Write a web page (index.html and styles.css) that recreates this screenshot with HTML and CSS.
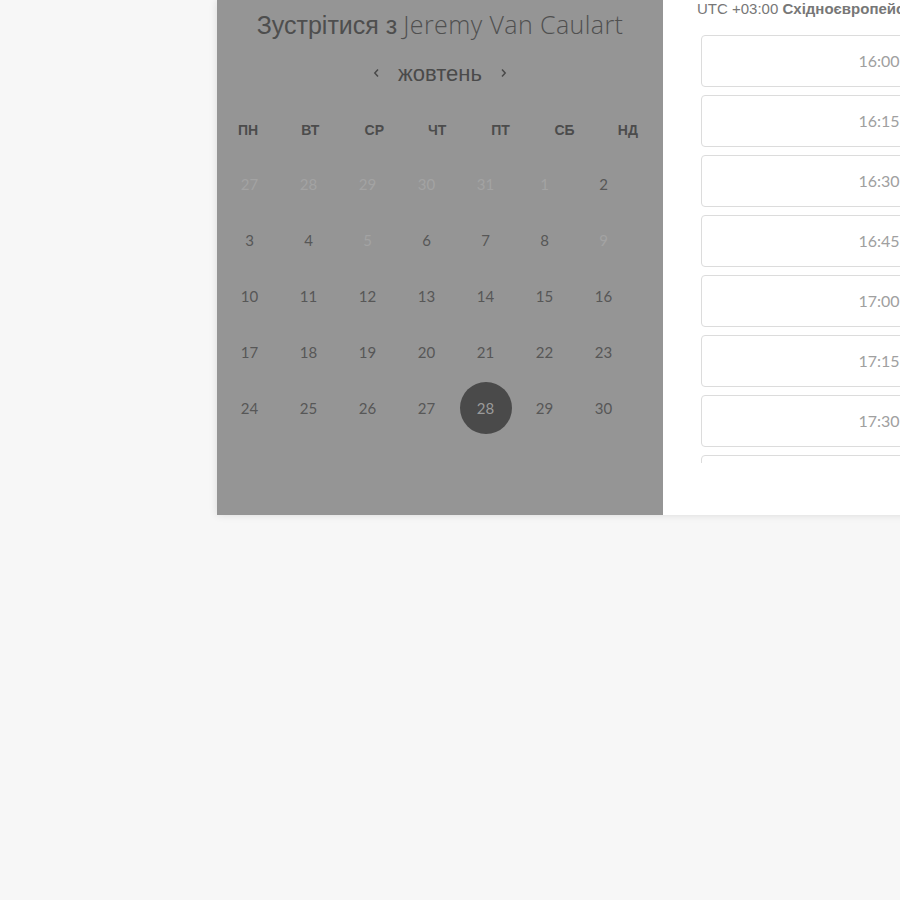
FILE: index.html
```html
<!DOCTYPE html>
<html lang="uk">
<head>
<meta charset="utf-8">
<title>Зустрітися з Jeremy Van Caulart</title>
<link rel="stylesheet" href="styles.css">
</head>
<body>
<div class="card">
  <section class="left">
    <h1 class="title"><span class="title-cyr">Зустрітися з</span> <span class="title-name">Jeremy Van Caulart</span></h1>
    <div class="month-nav">
      <svg class="chev" width="7" height="10" viewBox="0 0 7 10"><path d="M5 1.5 L1.8 5 L5 8.5" fill="none" stroke="#4a4a4a" stroke-width="1.5"/></svg>
      <span class="month">жовтень</span>
      <svg class="chev" width="7" height="10" viewBox="0 0 7 10"><path d="M2 1.5 L5.2 5 L2 8.5" fill="none" stroke="#4a4a4a" stroke-width="1.5"/></svg>
    </div>
    <div class="weekdays">
      <span>ПН</span><span>ВТ</span><span>СР</span><span>ЧТ</span><span>ПТ</span><span>СБ</span><span>НД</span>
    </div>
    <div class="days">
      <span class="day off">27</span><span class="day off">28</span><span class="day off">29</span><span class="day off">30</span><span class="day off">31</span><span class="day off">1</span><span class="day">2</span>
      <span class="day">3</span><span class="day">4</span><span class="day off">5</span><span class="day">6</span><span class="day">7</span><span class="day">8</span><span class="day off">9</span>
      <span class="day">10</span><span class="day">11</span><span class="day">12</span><span class="day">13</span><span class="day">14</span><span class="day">15</span><span class="day">16</span>
      <span class="day">17</span><span class="day">18</span><span class="day">19</span><span class="day">20</span><span class="day">21</span><span class="day">22</span><span class="day">23</span>
      <span class="day">24</span><span class="day">25</span><span class="day">26</span><span class="day">27</span><span class="day selected"><span class="dot">28</span></span><span class="day">29</span><span class="day">30</span>
    </div>
  </section>
  <section class="right">
    <div class="tz">UTC +03:00 <b>Східноєвропейський час</b></div>
    <div class="slots">
      <div class="slot">16:00</div>
      <div class="slot">16:15</div>
      <div class="slot">16:30</div>
      <div class="slot">16:45</div>
      <div class="slot">17:00</div>
      <div class="slot">17:15</div>
      <div class="slot">17:30</div>
      <div class="slot">17:45</div>
    </div>
  </section>
</div>
</body>
</html>
```
FILE: styles.css
```css
html, body {
  margin: 0;
  padding: 0;
  background: #f7f7f7;
  overflow: hidden;
  height: 100%;
}

.card {
  margin-left: 217px;
  width: 820px;
  height: 515px;
  display: flex;
  background: #ffffff;
  box-shadow: 0 0 8px rgba(0, 0, 0, 0.12);
}

.left {
  width: 446px;
  flex: none;
  background: #959595;
  padding-top: 8px;
  box-sizing: border-box;
}

.title {
  margin: 0;
  height: 32px;
  line-height: 32px;
  font-size: 24px;
  font-weight: normal;
  text-align: center;
  color: #4e4e4e;
  white-space: nowrap;
}

.title-cyr {
  font-family: "Liberation Sans", Arial, sans-serif;
  font-size: 25px;
}

.title-name {
  font-family: "Open Sans", Lato, sans-serif;
  font-weight: 300;
  font-size: 25px;
  letter-spacing: 0.4px;
  color: #505050;
}

.month-nav {
  margin-top: 19px;
  height: 30px;
  display: flex;
  align-items: center;
  justify-content: center;
  gap: 18px;
  font-family: "Liberation Sans", Arial, sans-serif;
  font-size: 22px;
  line-height: 30px;
  color: #4a4a4a;
}

.chev {
  display: block;
  margin-top: -2px;
}

.weekdays {
  margin-top: 31px;
  padding-left: 21px;
  display: grid;
  grid-template-columns: repeat(7, 63.3px);
  font-family: "Liberation Sans", Arial, sans-serif;
  font-weight: bold;
  font-size: 14px;
  line-height: 20px;
  color: #4c4c4c;
  white-space: nowrap;
}

.days {
  margin-top: 16px;
  padding-left: 3px;
  display: grid;
  grid-template-columns: repeat(7, 59px);
  grid-auto-rows: 56px;
  font-family: Lato, "Liberation Sans", sans-serif;
  font-size: 15px;
  color: #575757;
}

.day {
  display: flex;
  align-items: center;
  justify-content: center;
}

.day.off {
  color: #a3a3a3;
}

.dot {
  width: 52px;
  height: 52px;
  border-radius: 50%;
  background: #4a4a4a;
  color: #9a9a9a;
  display: flex;
  align-items: center;
  justify-content: center;
}

.right {
  flex: 1;
  padding-left: 34px;
  padding-top: 1px;
  box-sizing: border-box;
  overflow: hidden;
}

.tz {
  font-family: "Liberation Sans", Arial, sans-serif;
  font-size: 15px;
  line-height: 16px;
  color: #777777;
  white-space: nowrap;
}

.slots {
  margin-top: 18px;
  margin-left: 4px;
  height: 428px;
  overflow: hidden;
}

.slot {
  width: 354px;
  height: 50px;
  border: 1px solid #dcdcdc;
  border-radius: 4px;
  margin-bottom: 8px;
  text-align: center;
  line-height: 50px;
  font-family: Lato, "Liberation Sans", sans-serif;
  font-size: 16px;
  color: #a0a0a0;
}
```
